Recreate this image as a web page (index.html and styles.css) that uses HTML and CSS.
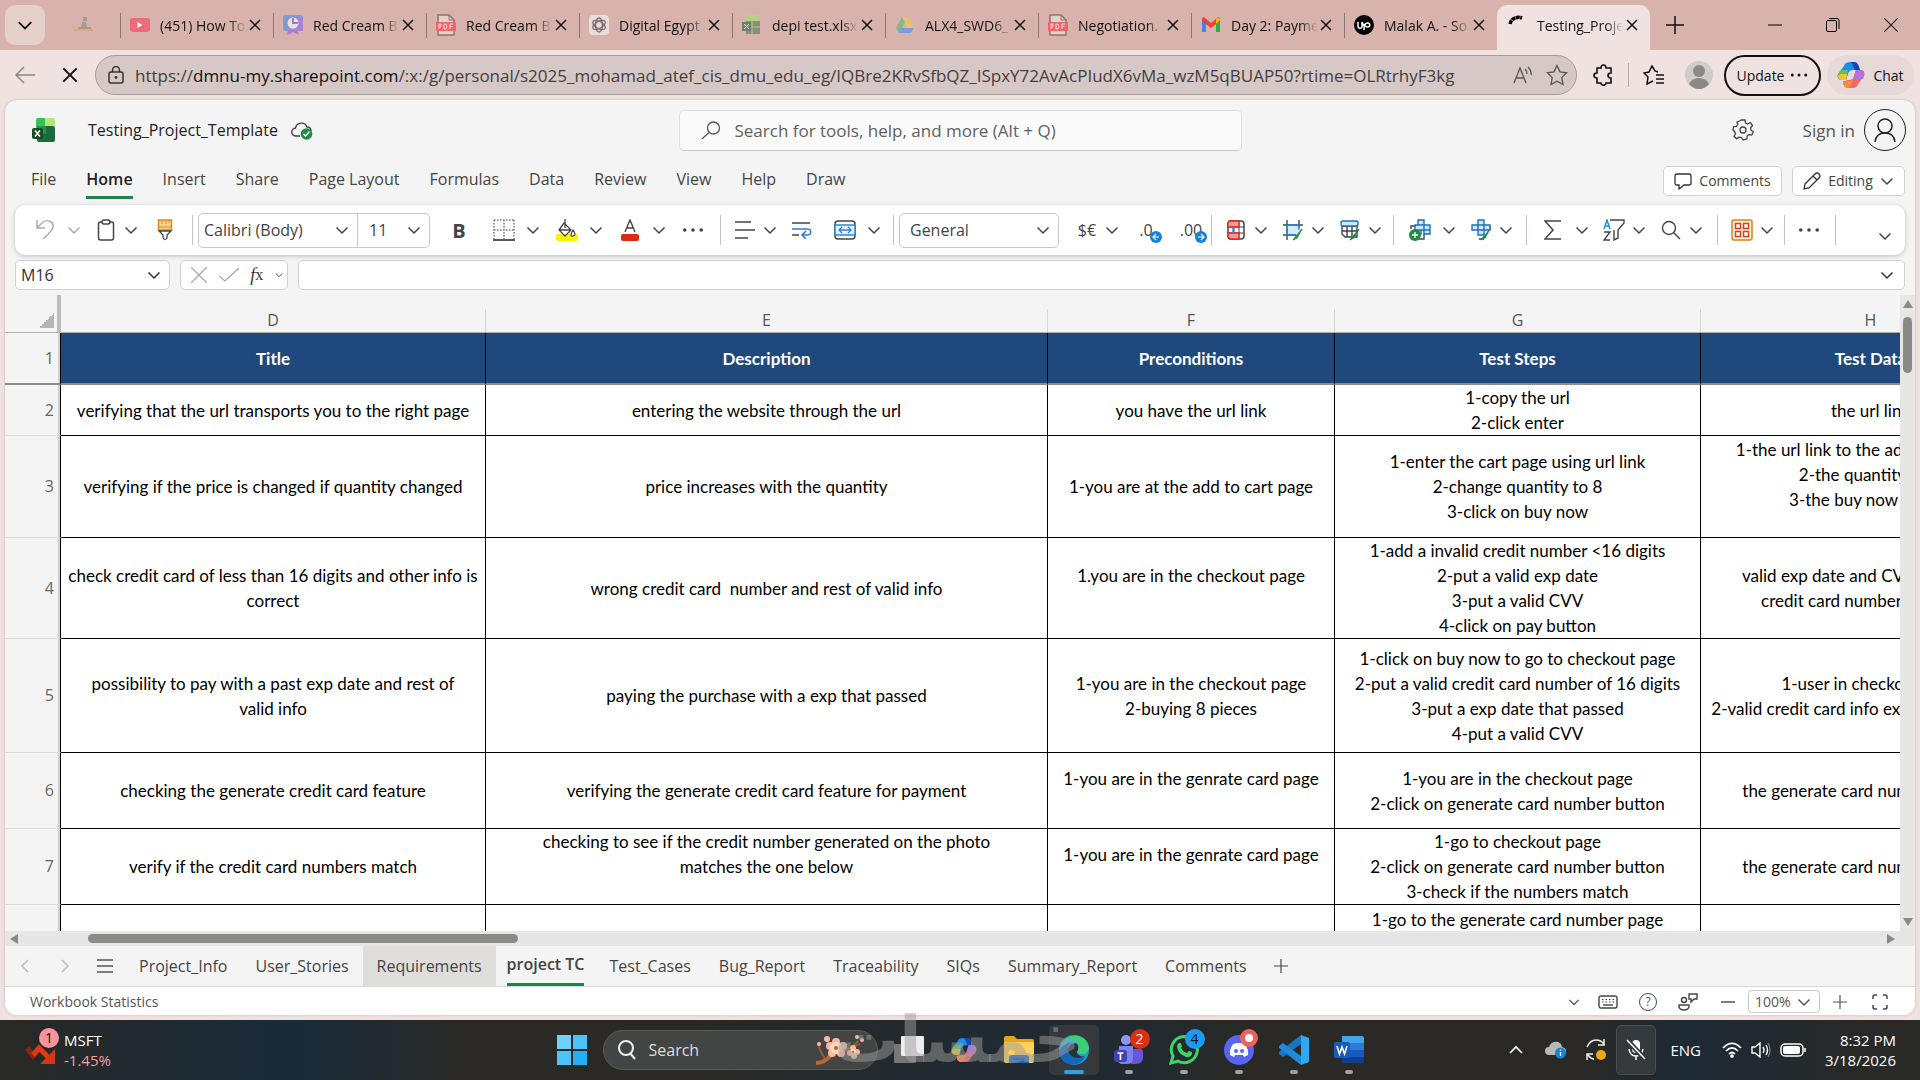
FILE: index.html
```html
<!DOCTYPE html>
<html lang="en">
<head>
  <meta charset="UTF-8">
  <meta name="viewport" content="width=device-width, initial-scale=1.0">
  <title>Testing_Project_Template</title>
  <link rel="stylesheet" href="styles.css">
</head>
<body>
  <!-- shared icons -->
  <svg class="sprite" aria-hidden="true">
    <symbol id="chev" viewBox="0 0 14 14"><path d="M1.5 4.5 7 10l5.500-5.500" fill="none" stroke="currentColor" stroke-width="1.500"/></symbol>
    <symbol id="cross" viewBox="0 0 12 12"><path d="M1 1l10 10M11 1 1 11" fill="none" stroke="currentColor" stroke-width="1.500"/></symbol>
    <symbol id="dots" viewBox="0 0 24 24"><g fill="currentColor"><circle cx="3" cy="12" r="2"/><circle cx="12" cy="12" r="2"/><circle cx="21" cy="12" r="2"/></g></symbol>
    <symbol id="plus" viewBox="0 0 18 18"><path d="M9 0v18M0 9h18" stroke="currentColor" stroke-width="1.500"/></symbol>
    <symbol id="pdf" viewBox="0 0 20 22"><path d="M2 1h11l5 5v15H2z" fill="#e4d0cd" stroke="#8d7370" stroke-width="1.500"/><path d="M13 1v5h5" fill="none" stroke="#8d7370"/><rect x="0" y="8" width="20" height="9" fill="#f0646a"/><path d="M3 15v-5h2v3H3M8 10v5h2l1-2.500-1-2.500zM14 15v-5h3M14 12.500h2.500" fill="none" stroke="#fbd9d9"/></symbol>
    <symbol id="copilot" viewBox="0 0 28 28"><path d="M7 5c1-3 3-4 6-4h4c3 0 4 2 5 5l1 3h-7c-3 0-4 1-5 4l-2 6H5c-4 0-5-3-4-6z" fill="#1b8fe6"/><path d="M1 13 4 9h7l-2 10H5c-4 0-5-3-4-6z" fill="#5cc25a"/><path d="M1 15l3-2h6l-1 6H5c-3 0-4-2-4-4z" fill="#f3c623"/><path d="M13 1h4c3 0 4 2 5 5l1 3h-5c-2-3-2-7-5-8z" fill="#1546b8"/><path d="M21 23c-1 3-3 4-6 4h-4c-3 0-4-2-5-5l4-3h2c3 0 4-1 5-4l2-6h4c4 0 5 3 4 6z" fill="#f0656f"/><path d="M17 15l2-6h4c4 0 5 3 4 6l-1 3h-9z" fill="#b072dc"/><path d="M6 20h6c2 0 3-1 4-2 0 4-2 8-5 9-3 0-4-2-5-5z" fill="#fa8b35"/></symbol>
  </svg>

  <header class="tabstrip">
    <button class="tab-search" aria-label="Search tabs"><svg width="16" height="16"><use href="#chev"/></svg></button>
    <div class="tab pinned"><svg width="22" height="18" viewBox="0 0 22 18"><path d="M10 1h4v4h-4zM9 6h4l1 5h4v2H5v-2h3z" fill="#a99a91"/><path d="M1 14h20" stroke="#d9a970" stroke-width="2" stroke-dasharray="3 1"/></svg></div>
    <div class="tab"><svg width="20" height="20" viewBox="0 0 20 20"><rect y="3" width="20" height="14" rx="3" fill="#ed6a7b"/><path d="M7.500 7v6l5-3z" fill="#fff"/></svg><span>(451) How To</span><button aria-label="Close"><svg width="12" height="12"><use href="#cross"/></svg></button></div>
    <div class="tab"><svg width="20" height="20" viewBox="0 0 20 20"><rect width="20" height="16" rx="3" fill="#7f9bd0"/><path d="M10 16h10V4l-8-4z" fill="#a582d8"/><path d="M5 15l-1 5 6-3 6 3-2-5z" fill="#b277d6"/><circle cx="10" cy="8" r="5.500" fill="#ecdfe9"/><path d="M10 3v5h5" stroke="#8b86c9" stroke-width="2" fill="none"/></svg><span>Red Cream Brand</span><button aria-label="Close"><svg width="12" height="12"><use href="#cross"/></svg></button></div>
    <div class="tab"><svg width="20" height="22"><use href="#pdf"/></svg><span>Red Cream Brand</span><button aria-label="Close"><svg width="12" height="12"><use href="#cross"/></svg></button></div>
    <div class="tab"><svg width="20" height="20" viewBox="0 0 20 20"><rect width="20" height="20" rx="4" fill="#eadcda"/><g fill="none" stroke="#7c706e" stroke-width="1.300"><ellipse cx="10" cy="10" rx="3.500" ry="7"/><ellipse cx="10" cy="10" rx="3.500" ry="7" transform="rotate(60 10 10)"/><ellipse cx="10" cy="10" rx="3.500" ry="7" transform="rotate(120 10 10)"/></g></svg><span>Digital Egypt</span><button aria-label="Close"><svg width="12" height="12"><use href="#cross"/></svg></button></div>
    <div class="tab"><svg width="20" height="20" viewBox="0 0 20 20"><rect x="4" width="13" height="7" rx="1" fill="#b9cf85"/><rect x="4" y="6" width="14" height="13" fill="#84926f"/><path d="M10 6v13M4 12h14" stroke="#b5bda0"/><rect y="7" width="9" height="9" fill="#718068"/><path d="M2 9l5 5M7 9l-5 5" stroke="#e5ded8"/></svg><span>depi test.xlsx</span><button aria-label="Close"><svg width="12" height="12"><use href="#cross"/></svg></button></div>
    <div class="tab"><svg width="20" height="20" viewBox="0 0 20 20"><path d="M7 2h6l-3 5-6 11-3-5z" fill="#84b78d"/><path d="M7 2h6l6 11h-6z" fill="#e8c069"/><path d="M6 13h13l-3 5H4z" fill="#7d9bdd"/></svg><span>ALX4_SWD6_</span><button aria-label="Close"><svg width="12" height="12"><use href="#cross"/></svg></button></div>
    <div class="tab"><svg width="20" height="22"><use href="#pdf"/></svg><span>Negotiation.</span><button aria-label="Close"><svg width="12" height="12"><use href="#cross"/></svg></button></div>
    <div class="tab"><svg width="20" height="20" viewBox="0 0 20 20"><path d="M1 5l4 3v9H1z" fill="#4285f4"/><path d="M15 8l4-3v12h-4z" fill="#34a853"/><path d="M1 4c0-2 2-2 3-1l6 5 6-5c1-1 3-1 3 1v2l-9 7-9-7z" fill="#ea4335"/><path d="M15 4c2-2 4-1 4 1l-4 4z" fill="#fbbc04"/></svg><span>Day 2: Payment</span><button aria-label="Close"><svg width="12" height="12"><use href="#cross"/></svg></button></div>
    <div class="tab"><svg width="20" height="20" viewBox="0 0 20 20"><circle cx="10" cy="10" r="10" fill="#000"/><path d="M4 7v4c0 3 4 3 4 0V7c1 3 3 5 3 5M10 15c0-3 1-7 3.500-7 3 0 3 4 0 4-1.500 0-2.500-1-3.500-3" fill="none" stroke="#fff" stroke-width="1.500"/></svg><span>Malak A. - So</span><button aria-label="Close"><svg width="12" height="12"><use href="#cross"/></svg></button></div>
    <div class="tab active"><svg width="20" height="20" viewBox="0 0 20 20"><path d="M3 9c1-5 6-8 12-6" fill="none" stroke="#000" stroke-width="3.500" stroke-dasharray="4 .5"/></svg><span>Testing_Project</span><button aria-label="Close"><svg width="12" height="12"><use href="#cross"/></svg></button></div>
    <button class="new-tab" aria-label="New tab"><svg width="18" height="18"><use href="#plus"/></svg></button>
    <div class="window-controls">
      <button aria-label="Minimize"><svg width="14" height="14"><path d="M0 7h14" stroke="#000"/></svg></button>
      <button aria-label="Restore"><svg width="14" height="14" viewBox="0 0 14 14" fill="none" stroke="#000"><rect x=".5" y="2.500" width="10" height="11" rx="1.500"/><path d="M3 .5h8q2 0 2 2V11"/></svg></button>
      <button aria-label="Close window"><svg width="14" height="14" viewBox="0 0 12 12"><path d="M0 0l12 12M12 0 0 12" stroke="#222"/></svg></button>
    </div>
  </header>

  <nav class="addressbar">
    <button class="back" aria-label="Back"><svg width="20" height="18" viewBox="0 0 20 18" fill="none" stroke="#8d8585" stroke-width="1.500"><path d="M20 9H1M9 1 1 9l8 8"/></svg></button>
    <button class="stop" aria-label="Stop"><svg width="16" height="16"><use href="#cross"/></svg></button>
    <div class="url">
      <svg width="16" height="18" viewBox="0 0 16 18" fill="none" stroke="#3a3435" stroke-width="1.500"><rect x="1" y="6" width="14" height="11" rx="2"/><path d="M4.500 6V4a3.500 3.500 0 0 1 7 0v2"/><circle cx="8" cy="11.500" r=".7" fill="#3a3435"/></svg>
      <span class="url-text">https://<b>dmnu-my.sharepoint.com</b>/:x:/g/personal/s2025_mohamad_atef_cis_dmu_edu_eg/IQBre2KRvSfbQZ_ISpxY72AvAcPIudX6vMa_wzM5qBUAP50?rtime=OLRtrhyF3kg</span>
      <button aria-label="Read aloud"><svg width="20" height="18" viewBox="0 0 20 18" fill="none" stroke="#5a5354" stroke-width="1.300"><path d="M1 17 7 2l6 15M3 12h8M12 3q2 2 2 5M15 1q4 4 3 8"/></svg></button>
      <button aria-label="Favorite"><svg width="22" height="22" viewBox="0 0 22 22"><path d="M11 1.500l3 6.300 6.600 1-4.800 4.800 1.200 6.900-6-3.300-6 3.300 1.200-6.900L1.400 8.800l6.600-1z" fill="none" stroke="#5a5354" stroke-width="1.300"/></svg></button>
    </div>
    <button class="ext" aria-label="Extensions"><svg width="20" height="22" viewBox="0 0 20 22"><path d="M4 4h4c0-4 5-4 5 0h5v5c-4 0-4 5 0 5v5h-5c0 3-5 3-5 0H4v-5c-4 0-4-5 0-5z" fill="none" stroke="#111" stroke-width="1.600"/></svg></button>
    <button class="favs" aria-label="Favorites"><svg width="22" height="20" viewBox="0 0 22 20" fill="none" stroke="#111" stroke-width="1.500"><path d="M15 7l-3-1-3-5-3 6-5 1 4 4-1 7 6-3M13 10h8M13 14h8M13 18h8"/></svg></button>
    <button class="profile" aria-label="Profile"><svg width="28" height="28" viewBox="0 0 28 28"><circle cx="14" cy="14" r="14" fill="#cfcccb"/><circle cx="14" cy="10" r="6" fill="#8b8886"/><path d="M4 23q3-6 10-6t10 6q-4 5-10 5T4 23z" fill="#8b8886"/></svg></button>
    <button class="update">Update <svg width="18" height="18"><use href="#dots"/></svg></button>
    <button class="chat"><svg width="28" height="28"><use href="#copilot"/></svg>Chat</button>
  </nav>

  <main class="app">
    <header class="titlebar">
      <div class="doc">
        <svg width="23" height="24" viewBox="0 0 23 24"><rect x="4" width="10" height="12" rx="2" fill="#35c05c"/><path d="M13 0h8q2 0 2 2v6H13z" fill="#b7e57a"/><rect x="5" y="8" width="18" height="16" rx="2" fill="#1c6b37"/><path d="M5 8h9v8H5z" fill="#23964a"/><rect y="10" width="11" height="11" rx="2" fill="#134f27"/><path d="M3 12.500l5 6M8 12.500l-5 6" stroke="#fff" stroke-width="1.500"/></svg>
        <h1>Testing_Project_Template</h1>
        <svg width="22" height="20" viewBox="0 0 22 20"><path d="M9 16H5a4 4 0 0 1-.5-8A6 6 0 0 1 16 7q4 0 4 4" fill="none" stroke="#444" stroke-width="1.400"/><circle cx="15.500" cy="14" r="5.800" fill="#1e8e46"/><path d="M12.500 14l2 2 4-4.500" fill="none" stroke="#fff" stroke-width="1.400"/></svg>
      </div>
      <label class="search">
        <svg width="20" height="18" viewBox="0 0 20 18" fill="none" stroke="#555" stroke-width="1.300"><circle cx="12.500" cy="7" r="6"/><path d="M8 11.500 1 18"/></svg>
        <input type="search" placeholder="Search for tools, help, and more (Alt + Q)" aria-label="Search">
      </label>
      <div class="account">
        <button aria-label="Settings"><svg width="22" height="22" viewBox="0 0 22 22" fill="none" stroke="#444" stroke-width="1.300"><path d="M9 1h4l.6 3 2 1 2.700-1.500 2.300 3-2 2.300.2 2.200 2.500 1.700-1.600 3.400-3-.5-1.600 1.500L15 20l-4 1-1.500-2.500-2.500-.3-2.300 1.600-2.700-2.500 1.500-2.600-.9-2L1 11l.5-3.500 3-.2 1.300-1.600L5 3l3.500-1.500z"/><circle cx="11" cy="11" r="3"/></svg></button>
        <a href="#">Sign in</a>
        <button class="person" aria-label="Account"><svg width="22" height="24" viewBox="0 0 22 24" fill="none" stroke="#222" stroke-width="1.500"><circle cx="11" cy="8" r="7"/><path d="M1 24q1-9 10-9t10 9"/></svg></button>
      </div>
    </header>

    <nav class="menu">
      <a href="#">File</a><a href="#" class="current">Home</a><a href="#">Insert</a><a href="#">Share</a><a href="#">Page Layout</a><a href="#">Formulas</a><a href="#">Data</a><a href="#">Review</a><a href="#">View</a><a href="#">Help</a><a href="#">Draw</a>
      <div class="menu-right">
        <button class="comments"><svg width="18" height="18" viewBox="0 0 18 18"><path d="M3 2h12q2 0 2 2v7q0 2-2 2h-5l-5 4v-4H3q-2 0-2-2V4q0-2 2-2z" fill="none" stroke="#333" stroke-width="1.300"/></svg>Comments</button>
        <button class="editing"><svg width="18" height="18" viewBox="0 0 18 18"><path d="M2 12 12 2q2-2 4 0t0 4L6 16l-5 1zM10 4l4 4" fill="none" stroke="#333" stroke-width="1.300"/></svg>Editing<svg width="14" height="14"><use href="#chev"/></svg></button>
      </div>
    </nav>

    <section class="ribbon">
      <div class="group clipboard">
        <div class="split wide disabled"><button aria-label="Undo"><svg width="20" height="22" viewBox="0 0 20 22" fill="none" stroke="currentColor" stroke-width="1.400"><path d="M2 1v8h8M2 9l5-5c5-5 12-1 11 4 0 3-2 4-10 12"/></svg></button><button aria-label="Undo options"><svg width="14" height="14"><use href="#chev"/></svg></button></div>
        <div class="split"><button aria-label="Paste"><svg width="18" height="22" viewBox="0 0 18 22" fill="none" stroke="currentColor" stroke-width="1.500"><rect x="1.500" y="3" width="15" height="18" rx="2"/><rect x="5" y="1" width="8" height="4" rx="2" fill="#fff"/></svg></button><button aria-label="Paste options"><svg width="14" height="14"><use href="#chev"/></svg></button></div>
        <button class="tool wide" aria-label="Format painter"><svg width="16" height="22" viewBox="0 0 16 22"><path d="M1.500 1h13v10h-13z" fill="#fbd28b" stroke="#de8b21" stroke-width="1.500"/><path d="M5 1v4M9 1v4M12 1v3M1 8h14" stroke="#de8b21"/><path d="M2 12h12l-4 4v3q-2 3-4 0v-3z" fill="#fff" stroke="#444" stroke-width="1.300"/></svg></button>
      </div>
      <div class="group font">
        <div class="fontbox">
          <label class="drop name"><select aria-label="Font"><option>Calibri (Body)</option></select><svg width="14" height="14"><use href="#chev"/></svg></label>
          <label class="drop size"><select aria-label="Font size"><option>11</option></select><svg width="14" height="14"><use href="#chev"/></svg></label>
        </div>
        <button class="tool bold">B</button>
        <div class="split wide"><button aria-label="Borders"><svg width="22" height="22" viewBox="0 0 22 22"><g fill="none" stroke="#777" stroke-dasharray="1.500 1.500" stroke-width="1.500"><path d="M1 1h20M1 11h20M1 1v19M11 1v19M21 1v19"/></g><path d="M0 21h22" stroke="#222" stroke-width="1.500"/></svg></button><button aria-label="Border options"><svg width="14" height="14"><use href="#chev"/></svg></button></div>
        <div class="split wide"><button aria-label="Fill color"><svg width="22" height="22" viewBox="0 0 22 22"><rect y="15" width="22" height="7" rx="2" fill="#fff200"/><path d="M8 4l7 7-6 6-6-6zM9 0v9M3 11h12" fill="#fff" stroke="#444" stroke-width="1.300"/><path d="M17 11q4 5 0 6t0-6z" fill="#fff" stroke="#444" stroke-width="1.200"/></svg></button><button aria-label="Fill options"><svg width="14" height="14"><use href="#chev"/></svg></button></div>
        <div class="split wide"><button aria-label="Font color"><svg width="18" height="22" viewBox="0 0 18 22"><path d="M4 13 9 1l5 12M6 9h6" fill="none" stroke="#444" stroke-width="1.400"/><rect y="15" width="18" height="7" rx="2" fill="#d92c12"/></svg></button><button aria-label="Font color options"><svg width="14" height="14"><use href="#chev"/></svg></button></div>
        <button class="tool wide" aria-label="More font options"><svg width="22" height="22"><use href="#dots"/></svg></button>
      </div>
      <div class="group align">
        <div class="split"><button aria-label="Align"><svg width="20" height="18" viewBox="0 0 20 18"><path d="M0 1h16M0 9h20M0 17h13" stroke="#444" stroke-width="1.500"/></svg></button><button aria-label="Align options"><svg width="14" height="14"><use href="#chev"/></svg></button></div>
        <button class="tool" aria-label="Wrap text"><svg width="20" height="18" viewBox="0 0 20 18" fill="none" stroke-width="1.500"><path d="M0 2h18M0 14h7" stroke="#444"/><path d="M0 8h15c5 0 5 6 0 6h-4M14 10l-4 4 4 4" stroke="#2a7fd0"/></svg></button>
        <div class="split wide"><button aria-label="Merge"><svg width="22" height="20" viewBox="0 0 22 20"><rect x="1" y="1" width="20" height="18" rx="3" fill="#fff" stroke="#444" stroke-width="1.500"/><rect x="1" y="5" width="20" height="10" fill="#e5f2fc" stroke="#2a86d8" stroke-width="1.500"/><path d="M5 10h12M8 7l-3 3 3 3M14 7l3 3-3 3" fill="none" stroke="#2a86d8" stroke-width="1.300"/></svg></button><button aria-label="Merge options"><svg width="14" height="14"><use href="#chev"/></svg></button></div>
      </div>
      <div class="group number">
        <label class="drop format"><select aria-label="Number format"><option>General</option></select><svg width="14" height="14"><use href="#chev"/></svg></label>
        <div class="split"><button class="glyph">$€</button><button aria-label="Currency options"><svg width="14" height="14"><use href="#chev"/></svg></button></div>
        <button class="tool wide decimal">.0<svg width="12" height="12" viewBox="0 0 12 12"><circle cx="6" cy="6" r="6" fill="#1583d7"/><path d="M9 6H3M6 3 3 6l3 3" fill="none" stroke="#fff" stroke-width="1.200"/></svg></button>
        <button class="tool wide decimal">.00<svg width="12" height="12" viewBox="0 0 12 12"><circle cx="6" cy="6" r="6" fill="#1583d7"/><path d="M3 6h6M6 3l3 3-3 3" fill="none" stroke="#fff" stroke-width="1.200"/></svg></button>
      </div>
      <div class="group styles">
        <div class="split"><button aria-label="Conditional formatting"><svg width="18" height="20" viewBox="0 0 18 20"><rect x="1" y="1" width="16" height="18" rx="3" fill="#fff" stroke="#444" stroke-width="1.500"/><path d="M1 7h16M1 13h16M12 1v18M7 7v6" stroke="#444"/><path d="M2 1h10v6H1V3zM1 13h11v6H3l-2-2z" fill="#f79a97" stroke="#d8291c" stroke-width="1.300"/><path d="M6 7v6" stroke="#2a86d8" stroke-width="1.500"/></svg></button><button aria-label="More"><svg width="14" height="14"><use href="#chev"/></svg></button></div>
        <div class="split"><button aria-label="Format cells"><svg width="20" height="22" viewBox="0 0 20 22"><rect x="4" y="6" width="12" height="10" fill="#d6ecfb"/><path d="M0 6h20M0 16h13M4 1v20M16 1v8" stroke="#444" stroke-width="1.400"/><path d="M4 6h12v5M4 6v10h8" fill="none" stroke="#2a86d8" stroke-width="1.300"/><path d="M19 10l-6 7-3 4 4-2z" fill="#1e8e46" stroke="#1e8e46"/></svg></button><button aria-label="More"><svg width="14" height="14"><use href="#chev"/></svg></button></div>
        <div class="split"><button aria-label="Format as table"><svg width="20" height="22" viewBox="0 0 20 22"><path d="M2 7h15v11H5l-3-3zM2 12h15M7 7v11M12 7v11" fill="none" stroke="#444" stroke-width="1.400"/><rect x="1" y="2" width="17" height="5" rx="2" fill="#cfe8fb" stroke="#1c6fc0" stroke-width="1.400"/><path d="M19 10l-6 7-3 4 4-2z" fill="#1e8e46" stroke="#1e8e46"/></svg></button><button aria-label="More"><svg width="14" height="14"><use href="#chev"/></svg></button></div>
      </div>
      <div class="group cells">
        <div class="split wide"><button aria-label="Insert cells"><svg width="22" height="22" viewBox="0 0 22 22"><path d="M2 10V7h6M10 20h5v-5" fill="none" stroke="#444" stroke-width="1.400"/><path d="M9 1h6v5h6v9h-6v-4h-3v4H9v-4H6V6h3zM9 6h6v9M15 6v9M9 11h12" fill="#cfe8fb" stroke="#1c6fc0" stroke-width="1.400"/><circle cx="6" cy="16" r="6" fill="#1e8e46"/><path d="M6 13v6M3 16h6" stroke="#fff" stroke-width="1.300"/></svg></button><button aria-label="More"><svg width="14" height="14"><use href="#chev"/></svg></button></div>
        <div class="split"><button aria-label="Format rows and columns"><svg width="20" height="22" viewBox="0 0 20 22"><path d="M8 20h5M19 7v3" stroke="#444" stroke-width="1.400"/><path d="M7 1h6v5h6v5h-6v5H7v-5H1V6h6zM7 6h6v5H7z" fill="#cfe8fb" stroke="#1c6fc0" stroke-width="1.400"/><path d="M19 10l-6 7-3 4 4-2z" fill="#1e8e46" stroke="#1e8e46"/></svg></button><button aria-label="More"><svg width="14" height="14"><use href="#chev"/></svg></button></div>
      </div>
      <div class="group edit">
        <div class="split wide"><button aria-label="AutoSum"><svg width="18" height="20" viewBox="0 0 18 20"><path d="M17 1H1l8 9-8 9h16" fill="none" stroke="#444" stroke-width="1.500"/></svg></button><button aria-label="More"><svg width="14" height="14"><use href="#chev"/></svg></button></div>
        <div class="split"><button aria-label="Sort and filter"><svg width="22" height="22" viewBox="0 0 22 22" fill="none" stroke-width="1.400"><path d="M7 1h14v3l-6 7v8l-4 2V11" stroke="#444"/><path d="M1 10 4 1l3 9M2 7h4" stroke="#1c86d8"/><path d="M1 13h6l-6 8h6" stroke="#444"/></svg></button><button aria-label="More"><svg width="14" height="14"><use href="#chev"/></svg></button></div>
        <div class="split"><button aria-label="Find"><svg width="20" height="20" viewBox="0 0 20 20"><circle cx="8" cy="8" r="6.500" fill="none" stroke="#444" stroke-width="1.400"/><path d="M13 13l6 6" stroke="#444" stroke-width="1.400"/></svg></button><button aria-label="More"><svg width="14" height="14"><use href="#chev"/></svg></button></div>
      </div>
      <div class="group addins">
        <div class="split"><button aria-label="Add-ins"><svg width="22" height="22" viewBox="0 0 22 22" stroke-width="1.500"><rect x="1" y="1" width="20" height="20" rx="2" fill="#fdf0dc" stroke="#df7f1b"/><path d="M4.500 4.500h5v5h-5zM12.500 4.500h5v5h-5zM4.500 12.500h5v5h-5zM12.500 12.500h5v5h-5z" fill="#fff" stroke="#d8401c"/></svg></button><button aria-label="More"><svg width="14" height="14"><use href="#chev"/></svg></button></div>
      </div>
      <div class="group more"><button class="tool" aria-label="More commands"><svg width="22" height="22"><use href="#dots"/></svg></button></div>
      <button class="collapse" aria-label="Ribbon display options"><svg width="14" height="14"><use href="#chev"/></svg></button>
    </section>

    <section class="formulabar">
      <label class="namebox"><input value="M16" aria-label="Name box"><svg width="14" height="14"><use href="#chev"/></svg></label>
      <div class="fx">
        <button aria-label="Cancel"><svg width="16" height="16" viewBox="0 0 16 16"><path d="M0 0l16 16M16 0 0 16" stroke="#aaa" stroke-width="1.300"/></svg></button>
        <button aria-label="Enter"><svg width="20" height="14" viewBox="0 0 20 14"><path d="M0 8l6 5L20 0" fill="none" stroke="#aaa" stroke-width="1.300"/></svg></button>
        <button class="fx-label"><i>f</i><sub>x</sub></button>
        <button aria-label="Functions"><svg width="8" height="8"><use href="#chev"/></svg></button>
      </div>
      <label class="formula"><input aria-label="Formula"><svg width="14" height="14"><use href="#chev"/></svg></label>
    </section>

    <section class="sheet">
      <div class="cells-area">
        <table>
          <colgroup><col class="c-num"><col class="c-d"><col class="c-e"><col class="c-f"><col class="c-g"><col class="c-h"></colgroup>
          <thead>
            <tr class="letters"><th class="corner"></th><th><span>D</span></th><th><span>E</span></th><th><span>F</span></th><th><span>G</span></th><th><span>H</span></th></tr>
            <tr class="titles"><th class="num">1</th><th>Title</th><th>Description</th><th>Preconditions</th><th>Test Steps</th><th>Test Data</th></tr>
          </thead>
          <tbody>
            <tr class="r2"><th class="num">2</th><td>verifying that the url transports you to the right page</td><td>entering the website through the url</td><td>you have the url link</td><td>1-copy the url<br>2-click enter</td><td>the url link</td></tr>
            <tr class="r3"><th class="num">3</th><td>verifying if the price is changed if quantity changed</td><td>price increases with the quantity</td><td>1-you are at the add to cart page</td><td>1-enter the cart page using url link<br>2-change quantity to 8<br>3-click on buy now</td><td>1-the url link to the add to cart page<br>2-the quantity field<br>3-the buy now button<br>&nbsp;</td></tr>
            <tr class="r4"><th class="num">4</th><td>check credit card of less than 16 digits and other info is<br>correct</td><td>wrong credit card &nbsp;number and rest of valid info</td><td>1.you are in the checkout page<br>&nbsp;</td><td>1-add a invalid credit number &lt;16 digits<br>2-put a valid exp date<br>3-put a valid CVV<br>4-click on pay button</td><td>valid exp date and CVV and invalid<br>credit card number &lt;16 digits</td></tr>
            <tr class="r5"><th class="num">5</th><td>possibility to pay with a past exp date and rest of<br>valid info</td><td>paying the purchase with a exp that passed</td><td>1-you are in the checkout page<br>2-buying 8 pieces</td><td>1-click on buy now to go to checkout page<br>2-put a valid credit card number of 16 digits<br>3-put a exp date that passed<br>4-put a valid CVV</td><td>1-user in checkout page<br>2-valid credit card info except the exp date</td></tr>
            <tr class="r6"><th class="num">6</th><td>checking the generate credit card feature</td><td>verifying the generate credit card feature for payment</td><td>1-you are in the genrate card page<br>&nbsp;</td><td>1-you are in the checkout page<br>2-click on generate card number button</td><td>the generate card number page url</td></tr>
            <tr class="r6"><th class="num">7</th><td>verify if the credit card numbers match</td><td>checking to see if the credit number generated on the photo<br>matches the one below<br>&nbsp;</td><td>1-you are in the genrate card page<br>&nbsp;</td><td>1-go to checkout page<br>2-click on generate card number button<br>3-check if the numbers match</td><td>the generate card number page url</td></tr>
            <tr class="r8"><th class="num"></th><td></td><td></td><td></td><td>1-go to the generate card number page</td><td></td></tr>
          </tbody>
        </table>
      </div>
      <div class="vscroll"><i class="up"></i><i class="thumb"></i><i class="down"></i></div>
    </section>
    <div class="hscroll"><i class="left"></i><i class="thumb"></i><i class="right"></i></div>

    <nav class="sheet-tabs">
      <button class="nav" aria-label="Previous sheet"><svg width="8" height="14" viewBox="0 0 8 14"><path d="M7 1 1 7l6 6" fill="none" stroke="#bbb" stroke-width="1.500"/></svg></button>
      <button class="nav" aria-label="Next sheet"><svg width="8" height="14" viewBox="0 0 8 14"><path d="M1 1l6 6-6 6" fill="none" stroke="#bbb" stroke-width="1.500"/></svg></button>
      <button class="nav" aria-label="All sheets"><svg width="16" height="14" viewBox="0 0 16 14"><path d="M0 1h16M0 7h16M0 13h16" stroke="#555" stroke-width="1.500"/></svg></button>
      <a href="#">Project_Info</a><a href="#">User_Stories</a><a href="#" class="hover">Requirements</a><a href="#" class="current"><span>project TC</span></a><a href="#">Test_Cases</a><a href="#">Bug_Report</a><a href="#">Traceability</a><a href="#">SIQs</a><a href="#">Summary_Report</a><a href="#">Comments</a>
      <button class="nav" aria-label="New sheet"><svg width="14" height="14" viewBox="0 0 18 18"><use href="#plus"/></svg></button>
    </nav>

    <footer class="status">
      <span>Workbook Statistics</span>
      <div class="status-tools">
        <button class="narrow" aria-label="More"><svg width="12" height="12"><use href="#chev"/></svg></button>
        <button aria-label="Keyboard"><svg width="20" height="14" viewBox="0 0 20 14"><rect x="1" y="1" width="18" height="12" rx="2" fill="none" stroke="#444" stroke-width="1.400"/><path d="M4 4.500h12M4 7h12" stroke="#444" stroke-dasharray="1.500 2"/><path d="M5 10h10" stroke="#444" stroke-width="1.400"/></svg></button>
        <button class="help"><span>?</span></button>
        <button aria-label="Feedback"><svg width="20" height="18" viewBox="0 0 20 18" fill="none" stroke="#444" stroke-width="1.400"><circle cx="6" cy="7" r="2.500"/><path d="M1 12h10v2q-1 3-5 3t-5-3zM11 1h8v5h-3l-3 3V6h-2z"/></svg></button>
        <button aria-label="Zoom out"><svg width="14" height="14"><path d="M0 7h14" stroke="#555" stroke-width="1.500"/></svg></button>
        <label class="drop zoom"><select aria-label="Zoom"><option>100%</option></select><svg width="14" height="14"><use href="#chev"/></svg></label>
        <button aria-label="Zoom in"><svg width="14" height="14"><use href="#plus"/></svg></button>
        <button aria-label="Full screen"><svg width="16" height="16" viewBox="0 0 16 16"><path d="M1 5V3q0-2 2-2h2M11 1h2q2 0 2 2v2M15 11v2q0 2-2 2h-2M5 15H3q-2 0-2-2v-2" fill="none" stroke="#444" stroke-width="1.500"/></svg></button>
      </div>
    </footer>
  </main>

  <footer class="taskbar">
    <div class="widget">
      <svg width="36" height="32" viewBox="0 0 36 32"><path d="M3 14l6 8 7-8" fill="none" stroke="#8c2310" stroke-width="5"/><path d="M9 21l6-7 9 9" fill="none" stroke="#e03a12" stroke-width="5"/><path d="M16 30h15V15z" fill="#d93312"/></svg>
      <em class="badge">1</em>
      <p>MSFT<span>-1.45%</span></p>
    </div>
    <div class="tasks">
      <button aria-label="Start"><svg width="30" height="30" viewBox="0 0 30 30"><path d="M0 0h14v14H0z" fill="#6fd0fb"/><path d="M16 0h14v14H16z" fill="#4cc4fa"/><path d="M0 16h14v14H0z" fill="#4cc4fa"/><path d="M16 16h14v14H16z" fill="#27aef3"/></svg></button>
      <label class="task-search">
        <svg width="18" height="20" viewBox="0 0 18 20" fill="none" stroke="#eee" stroke-width="2"><circle cx="8" cy="8" r="7"/><path d="M12 13l5 6"/></svg>
        <input placeholder="Search" aria-label="Search Windows">
        <svg width="54" height="32" viewBox="0 0 54 32"><path d="M4 29c10-1 14-6 20-9s14-3 22-13M14 26C9 20 8 16 6 10M24 20c-6-4-8-10-8-14M38 14l10-4" fill="none" stroke="#9a5a2c" stroke-width="2"/><path d="M4 29c7 0 11-3 15-8" fill="none" stroke="#b56a30" stroke-width="4"/><g fill="#f6b9a4"><circle cx="24" cy="8" r="4"/><circle cx="31" cy="12" r="4"/><circle cx="29" cy="19" r="4"/><circle cx="20" cy="19" r="4"/><circle cx="18" cy="12" r="4"/><circle cx="41" cy="14" r="3"/><circle cx="45" cy="18" r="3"/><circle cx="38" cy="19" r="3"/><circle cx="42" cy="22" r="3"/><circle cx="15" cy="5" r="3"/><circle cx="7" cy="10" r="2"/><circle cx="45" cy="3" r="2"/><circle cx="50" cy="6" r="2"/></g><circle cx="24" cy="14" r="6" fill="#fbdcb8"/><circle cx="41" cy="18" r="3" fill="#fbdcb8"/><circle cx="24" cy="14" r="2" fill="#c4582f"/><circle cx="41" cy="18" r="1.200" fill="#c4582f"/></svg>
      </label>
      <button aria-label="Task view"><svg width="30" height="28" viewBox="0 0 30 28"><rect y="8" width="22" height="19" rx="1" fill="#777"/><rect x="7" width="23" height="20" rx="1" fill="#ededed"/></svg></button>
      <button aria-label="Copilot"><svg width="28" height="26"><use href="#copilot"/></svg></button>
      <button aria-label="File Explorer"><svg width="30" height="28" viewBox="0 0 30 28"><path d="M0 2q0-2 2-2h8l3 3h15q2 0 2 2v7H0z" fill="#e9a313"/><rect y="6" width="30" height="21" rx="2" fill="#fbd25a"/><path d="M5 27v-5q0-3 3-3h14q3 0 3 3v5z" fill="#1769b8"/><path d="M9 23h12" stroke="#0a4a8c" stroke-width="2"/></svg></button>
      <button class="focused" aria-label="Edge"><svg width="30" height="30" viewBox="0 0 30 30"><circle cx="15" cy="15" r="15" fill="#1a9fdd"/><path d="M2 9C8-3 29-2 30 13c0 6-9 8-12 4 3-6-5-11-16-8z" fill="#3ccf78"/><path d="M0 15C2 7 10 3 17 8c-6-2-9 3-8 7 1 7 8 9 17 7-4 8-14 10-20 5-4-3-6-7-6-12z" fill="#1565b8"/><path d="M9 15c0-4 3-7 8-7 3 2 3 6 1 9 0 3 4 5 8 4-6 4-16 2-17-6z" fill="#26323a"/><path d="M0 15C2 5 13 1 19 9 11 5 5 9 0 15z" fill="#2bb6ee"/></svg></button>
      <button class="running" aria-label="Teams"><svg width="30" height="30" viewBox="0 0 30 30"><circle cx="12" cy="5" r="5" fill="#8d95f7"/><path d="M17 14h9q3 0 3 3v5q0 7-7 7h-5z" fill="#6a55d8"/><path d="M5 11h14v12q0 6-6 6H8q-4 0-4-5z" fill="#7a83ee"/><rect y="15" width="13" height="12" rx="3" fill="#3f42b0"/><path d="M3.500 18h6M6.500 18v7" stroke="#fff" stroke-width="1.700"/></svg><em class="badge red">2</em></button>
      <button class="running" aria-label="WhatsApp"><svg width="30" height="30" viewBox="0 0 30 30"><path d="M2 28l2-7A13 13 0 1 1 9 26z" fill="none" stroke="#3bd668" stroke-width="3"/><path d="M10 8q2-1 3 3l-1 2q2 4 6 5l2-2q4 1 3 3-2 4-6 3Q9 19 8 12q0-3 2-4z" fill="#3bd668"/></svg><em class="badge blue">4</em></button>
      <button class="running" aria-label="Discord"><svg width="30" height="30" viewBox="0 0 30 30"><circle cx="15" cy="15" r="15" fill="#5865f2"/><path d="M9 9q6-2 12 0 4 6 3 11l-4 2-1-2h-8l-1 2-4-2Q5 15 9 9z" fill="#fff"/><circle cx="12" cy="16" r="2" fill="#5865f2"/><circle cx="18" cy="16" r="2" fill="#5865f2"/></svg><em class="badge dot"></em></button>
      <button class="running" aria-label="Visual Studio Code"><svg width="30" height="30" viewBox="0 0 30 30"><path d="M22 0l8 3v24l-8 3z" fill="#2fa9f0"/><path d="M22 0v9L4 22l-4-3v-2z" fill="#1577c4"/><path d="M22 30v-9L4 8 0 11v2z" fill="#1b8cdc"/></svg></button>
      <button class="running" aria-label="Word"><svg width="30" height="28" viewBox="0 0 30 28"><path d="M8 0h20q2 0 2 2v5H8z" fill="#41a5ee"/><path d="M8 7h22v7H8z" fill="#2b7cd3"/><path d="M8 14h22v7H8z" fill="#185abd"/><path d="M8 21h22v4q0 2-2 2H8z" fill="#103f91"/><rect y="6" width="16" height="16" rx="2" fill="#185abd"/><path d="M3 10l2.500 8L8 11l2.500 7L13 10" fill="none" stroke="#fff" stroke-width="1.600"/></svg></button>
    </div>
    <div class="tray">
      <button aria-label="Hidden icons"><svg width="14" height="14" viewBox="0 0 14 14"><path d="M1 10l6-6 6 6" fill="none" stroke="#fff" stroke-width="1.700"/></svg></button>
      <button aria-label="OneDrive"><svg width="22" height="18" viewBox="0 0 22 18"><path d="M4 14a4 4 0 0 1 0-8C6-1 16-1 17 6q4 1 4 4t-4 4z" fill="#b9b9b9"/><circle cx="15.500" cy="12" r="5.500" fill="#1583d7"/><path d="M15.500 11v4M15.500 8.500v1" stroke="#fff" stroke-width="1.300"/></svg></button>
      <button aria-label="Update"><svg width="20" height="22" viewBox="0 0 20 22" fill="none" stroke="#eee" stroke-width="1.500"><path d="M1 8Q4 1 10 1q5 0 8 4M18 0v6h-6M1 21v-6h6M2 16q3 4 6 4"/><circle cx="15" cy="16" r="5" fill="#f3a712" stroke="none"/></svg></button>
      <button class="mic" aria-label="Microphone"><svg width="20" height="22" viewBox="0 0 20 22" fill="none"><rect x="6" y="1" width="8" height="13" rx="4" fill="#fff"/><path d="M3 10q1 7 7 7t7-7M10 17v4" stroke="#fff" stroke-width="1.500"/><path d="M1 1l18 19" stroke="#35393b" stroke-width="5"/><path d="M1 1l18 19" stroke="#fff" stroke-width="1.500"/></svg></button>
      <span class="lang">ENG</span>
      <div class="system">
        <svg width="20" height="16" viewBox="0 0 20 16" fill="none" stroke="#fff" stroke-width="1.700"><path d="M1 6q9-9 18 0M4 9q6-6 12 0M7 12q3-3 6 0"/><circle cx="10" cy="14" r="1"/></svg>
        <svg width="20" height="16" viewBox="0 0 20 16" fill="none" stroke="#fff" stroke-width="1.400"><path d="M1 5h3l5-4v14l-5-4H1zM12 5q2 3 0 6M15 3q3 5 0 10"/><path d="M17 1q4 7 0 14" stroke="#777"/></svg>
        <svg width="26" height="14" viewBox="0 0 26 14"><rect x="1" y="1" width="22" height="12" rx="4" fill="none" stroke="#fff" stroke-width="1.500"/><rect x="3" y="3" width="17" height="8" rx="2" fill="#fff"/><path d="M25 5v4" stroke="#fff" stroke-width="1.500"/></svg>
      </div>
      <p class="clock">8:32 PM<span>3/18/2026</span></p>
    </div>
    <div class="watermark" lang="ar">خمسات</div>
  </footer>
</body>
</html>
```
FILE: styles.css
```css
* {
  box-sizing: border-box;
}

body {
  margin: 0;
  height: 100vh;
  display: flex;
  flex-direction: column;
  overflow: hidden;
  background-color: #f0e2e0;
  font-family: "Open Sans", sans-serif;
  font-size: 16px;
  color: #333;
}

button, input, select {
  font: inherit;
  color: inherit;
  background: none;
  border: none;
  padding: 0;
  margin: 0;
  outline: none;
}

button {
  display: flex;
  align-items: center;
  justify-content: center;
}

a {
  color: inherit;
  text-decoration: none;
}

svg {
  flex: none;
  display: block;
}

.sprite {
  position: absolute;
  width: 0;
  height: 0;
}

/* browser tabs */
.tabstrip {
  flex: none;
  display: flex;
  align-items: center;
  height: 50px;
  padding-left: 5px;
  background-color: #d8b2ac;
  color: #111;
  font-size: 14px;
}

.tab-search {
  width: 40px;
  height: 40px;
  border-radius: 10px;
  background-color: #e6d0cc;
}

.tab {
  display: flex;
  align-items: center;
  width: 153px;
  height: 25px;
  padding-left: 9px;
  border-left: 1px solid #8f7773;
}

.tab.pinned {
  width: 75px;
  padding-left: 28px;
  border-left: none;
}

.tab span {
  flex: none;
  width: 86px;
  margin-left: 10px;
  overflow: hidden;
  white-space: nowrap;
  mask-image: linear-gradient(to right, #000 80%, transparent);
}

.tab button {
  width: 18px;
}

.tab.active {
  align-self: flex-end;
  height: 45px;
  padding-bottom: 5px;
  border: none;
  padding-left: 10px;
  border-radius: 10px 10px 0 0;
  background-color: #f0e2e0;
}

.new-tab {
  width: 50px;
}

.window-controls {
  display: flex;
  margin-left: auto;
}

.window-controls button {
  width: 58px;
  height: 48px;
}

/* address bar */
.addressbar {
  flex: none;
  display: flex;
  align-items: center;
  height: 50px;
  padding: 0 6px 0 5px;
  color: #111;
}

.back {
  width: 40px;
}

.stop {
  width: 50px;
}

.url {
  flex: 1;
  display: flex;
  align-items: center;
  height: 40px;
  padding: 0 2px 0 12px;
  border: 1px solid #a89d9d;
  border-radius: 20px;
  background-color: #d6c8c7;
}

.url-text {
  flex: 1;
  margin-left: 11px;
  font-size: 17px;
  color: #453e40;
  white-space: nowrap;
  overflow: hidden;
}

.url-text b {
  font-weight: normal;
  color: #111;
}

.url button {
  width: 34px;
}

.ext {
  width: 52px;
  height: 24px;
  border-right: 1px solid #b8abaa;
}

.favs {
  width: 50px;
}

.profile {
  width: 40px;
}

.update {
  width: 97px;
  height: 41px;
  margin: 0 6px 0 5px;
  gap: 6px;
  border: 2px solid #111;
  border-radius: 21px;
  font-size: 14px;
}

.chat {
  width: 87px;
  height: 40px;
  gap: 8px;
  border-radius: 20px;
  background-color: #e6d9d7;
  font-size: 14px;
}

/* excel window */
.app {
  flex: 1;
  min-height: 0;
  display: flex;
  flex-direction: column;
  margin: 0 5px 5px;
  border-radius: 12px;
  overflow: hidden;
  background-color: #f4f4f4;
  box-shadow: 0 0 3px #c9b3b0;
}

.titlebar {
  flex: none;
  display: grid;
  grid-template-columns: 1fr 563px 1fr;
  align-items: center;
  height: 60px;
}

.doc {
  display: flex;
  align-items: center;
  padding-left: 27px;
}

.doc h1 {
  margin: 0 13px 0 33px;
  font-size: 16px;
  font-weight: normal;
  color: #222;
}

.search {
  display: flex;
  align-items: center;
  gap: 14px;
  height: 41px;
  padding: 0 21px;
  border: 1px solid #e0e0e0;
  border-bottom-color: #c8c8c8;
  border-radius: 5px;
  background-color: #fafafa;
  font-size: 17px;
}

.search input {
  flex: 1;
}

.search input::placeholder {
  color: #616161;
  opacity: 1;
}

.account {
  display: flex;
  align-items: center;
  justify-content: flex-end;
  padding-right: 9px;
  font-size: 17px;
  color: #555;
}

.account a {
  margin: 0 9px 0 49px;
}

.person {
  width: 42px;
  height: 42px;
  border: 1px solid #222;
  border-radius: 50%;
}

.menu {
  flex: none;
  display: flex;
  align-items: center;
  gap: 30px;
  height: 45px;
  padding: 0 10px 4px 26px;
  color: #444;
}

.menu a {
  line-height: 34px;
  border-bottom: 3px solid transparent;
}

.menu .current {
  font-weight: 600;
  color: #222;
  border-bottom-color: #1e8449;
}

.menu-right {
  display: flex;
  gap: 10px;
  margin-left: auto;
  font-size: 14px;
}

.menu-right button {
  height: 30px;
  gap: 7px;
  border: 1px solid #d1d1d1;
  border-radius: 5px;
  background-color: #fff;
}

.comments {
  width: 119px;
}

.editing {
  width: 113px;
}

/* ribbon */
.ribbon {
  flex: none;
  display: flex;
  align-items: center;
  height: 50px;
  margin: 0 10px;
  border-radius: 10px;
  background-color: #fff;
  box-shadow: 0 1px 4px #bbb;
  color: #444;
}

.group {
  display: flex;
  align-items: center;
  gap: 5px;
  height: 30px;
  padding-left: 6px;
  border-right: 1px solid #c9c0c2;
}

.clipboard { width: 178px; padding-left: 10px; }
.font { width: 528px; padding-left: 5px; }
.align { width: 173px; }
.number { width: 318px; padding-left: 5px; }
.styles { width: 182px; }
.cells { width: 133px; }
.edit { width: 191px; }
.addins { width: 67px; }
.more { width: 51px; }

.split {
  display: flex;
  margin-right: 2px;
}

.split button {
  width: 36px;
  height: 30px;
}

.split button + button {
  width: 14px;
}

.split.wide {
  margin-right: 0;
}

.split.wide button {
  width: 40px;
}

.split.wide button + button {
  width: 18px;
}

.disabled {
  color: #aaa;
}

.tool {
  width: 36px;
  height: 30px;
}

.tool.wide {
  width: 40px;
}

.bold {
  width: 40px;
  font-weight: bold;
  font-size: 20px;
}

.decimal {
  position: relative;
}

.decimal svg {
  position: absolute;
  right: 4px;
  bottom: 2px;
}

.drop {
  position: relative;
  display: flex;
  align-items: center;
}

.drop select {
  width: 100%;
  height: 100%;
  appearance: none;
}

.drop svg {
  position: absolute;
  right: 8px;
  pointer-events: none;
}

.fontbox {
  display: flex;
  width: 232px;
  height: 35px;
  margin-right: 4px;
  border: 1px solid #c8c8c8;
  border-radius: 5px;
}

.name {
  width: 159px;
  padding-left: 5px;
  border-right: 1px solid #c8c8c8;
}

.size {
  flex: 1;
  padding-left: 11px;
}

.format {
  width: 160px;
  height: 35px;
  margin-right: 5px;
  padding-left: 10px;
  border: 1px solid #c8c8c8;
  border-radius: 5px;
}

.collapse {
  margin: 12px 13px 0 auto;
}

/* formula bar */
.formulabar {
  flex: none;
  display: flex;
  gap: 10px;
  height: 40px;
  padding: 5px 10px;
}

.formulabar > * {
  display: flex;
  align-items: center;
  height: 30px;
  border: 1px solid #d1d1d1;
  border-radius: 5px;
  background-color: #fff;
}

.namebox {
  width: 155px;
  padding: 0 8px 0 5px;
}

.namebox input, .formula input {
  flex: 1;
  min-width: 0;
}

.fx {
  width: 108px;
  padding: 0 4px 0 10px;
  justify-content: space-between;
}

.fx-label {
  font-family: "Liberation Serif", serif;
  font-size: 18px;
}

.fx-label sub {
  font-size: 16px;
}

.formula {
  flex: 1;
  padding: 0 10px;
}

/* sheet */
.sheet {
  flex: 1;
  min-height: 0;
  display: flex;
}

.cells-area {
  flex: 1;
  min-width: 0;
  overflow: hidden;
}

table {
  width: 2036px;
  table-layout: fixed;
  border-collapse: separate;
  border-spacing: 0;
  font-family: Lato, sans-serif;
  font-size: 17px;
  line-height: 25px;
  color: #000;
}

.c-num { width: 56px; }
.c-d { width: 425px; }
.c-e { width: 562px; }
.c-f { width: 287px; }
.c-g { width: 366px; }
.c-h { width: 340px; }

td, th {
  padding: 0;
  text-align: center;
  white-space: nowrap;
}

td {
  background-color: #fff;
  border-right: 1px solid #000;
  border-bottom: 1px solid #000;
}

.letters th {
  height: 38px;
  padding-top: 14px;
  border-bottom: 1px solid #b0b0b0;
  font-family: "Open Sans", sans-serif;
  font-size: 16px;
  font-weight: normal;
  line-height: 23px;
  color: #555;
}

.letters span {
  display: block;
  border-right: 1px solid #d8d8d8;
}

.letters .corner {
  border-right: 4px solid #bdbdbd;
  background: linear-gradient(135deg, transparent 50%, #b5b5b5 50%) 34px 18px / 15px 15px no-repeat;
}

.titles th {
  height: 52px;
  border-right: 1px solid #000;
  border-bottom: 2px solid #8c8c8c;
  background-color: #1f497d;
  color: #fff;
  font-weight: bold;
}

tr .num {
  padding-right: 6px;
  border-right: 1px solid #000;
  border-bottom: 1px solid #dcdcdc;
  background-color: #f4f4f4;
  box-shadow: inset -2px 0 #d0d0d0;
  font-family: "Open Sans", sans-serif;
  font-size: 16px;
  font-weight: normal;
  text-align: right;
  color: #666;
}

.titles .num {
  border-bottom: 2px solid #8c8c8c;
}

.r2 td { height: 51px; }
.r3 td { height: 102px; }
.r4 td { height: 101px; }
.r5 td { height: 114px; }
.r6 td { height: 76px; }
.r8 td { height: 80px; padding-top: 2px; vertical-align: top; }

.vscroll {
  flex: none;
  display: flex;
  flex-direction: column;
  align-items: center;
  width: 15px;
  padding: 5px 0;
  background-color: #e6e6e6;
}

.vscroll .thumb {
  width: 9px;
  height: 56px;
  margin: 9px 0 auto;
  border-radius: 5px;
  background-color: #8a8a88;
}

.up, .down {
  border: 5px solid transparent;
  border-bottom: 8px solid #8a8a88;
  border-top: none;
}

.down {
  border-top: 8px solid #8a8a88;
  border-bottom: none;
}

.hscroll {
  flex: none;
  display: flex;
  align-items: center;
  height: 15px;
  padding: 0 20px 0 5px;
  background-color: #e6e6e6;
}

.hscroll .thumb {
  width: 430px;
  height: 9px;
  margin: 0 auto 0 70px;
  border-radius: 5px;
  background-color: #8a8a88;
}

.left, .right {
  border: 5px solid transparent;
  border-right: 8px solid #8a8a88;
  border-left: none;
}

.right {
  border-left: 8px solid #8a8a88;
  border-right: none;
}

.sheet-tabs {
  flex: none;
  display: flex;
  align-items: center;
  height: 41px;
  border-bottom: 1px solid #d8d8d8;
  color: #444;
}

.sheet-tabs a {
  padding: 0 14px;
  line-height: 40px;
}

.sheet-tabs .nav {
  width: 40px;
}

.sheet-tabs .hover {
  background-color: #e0dedd;
}

.sheet-tabs .current {
  font-weight: 600;
  padding: 0 11px;
}

.current span {
  display: block;
  line-height: 37px;
  border-bottom: 3px solid #1e8449;
}

.status {
  flex: none;
  display: flex;
  align-items: center;
  justify-content: space-between;
  height: 28px;
  padding: 1px 15px 0 25px;
  background-color: #fff;
  font-size: 14px;
  color: #555;
}

.status-tools {
  display: flex;
  align-items: center;
}

.status-tools button {
  width: 40px;
}

.status-tools .narrow {
  width: 28px;
}

.help span {
  width: 18px;
  height: 18px;
  border: 1px solid #444;
  border-radius: 50%;
  font-size: 12px;
  line-height: 16px;
}

.zoom {
  width: 72px;
  height: 23px;
  padding-left: 6px;
  border: 1px solid #c8c8c8;
  border-radius: 4px;
}

/* taskbar */
.taskbar {
  flex: none;
  position: relative;
  display: grid;
  grid-template-columns: 1fr auto 1fr;
  align-items: center;
  height: 60px;
  background: linear-gradient(to right, #2a2926 0, #1f2930 8%, #182a38 15%, #2a2926 24%, #2a2926 36%, #202a30 50%, #202a30 58%, #2a2926 65%, #2a2926 82%, #1d2934 88%, #292927 97%);
  color: #fff;
  font-size: 15px;
}

.taskbar p {
  margin: 0;
  line-height: 20px;
}

.taskbar p span {
  display: block;
}

.widget {
  position: relative;
  display: flex;
  align-items: center;
  gap: 4px;
  padding-left: 24px;
}

.widget p span {
  color: #f99ba2;
}

.badge {
  position: absolute;
  left: 39px;
  top: -2px;
  width: 20px;
  height: 20px;
  border-radius: 50%;
  background-color: #f9949c;
  color: #111;
  font-size: 14px;
  font-style: normal;
  line-height: 20px;
  text-align: center;
}

.tasks {
  display: flex;
  align-items: center;
  gap: 5px;
}

.tasks button {
  position: relative;
  width: 50px;
  height: 50px;
  border-radius: 5px;
}

.task-search {
  display: flex;
  align-items: center;
  gap: 13px;
  width: 275px;
  height: 40px;
  margin: 0 1px;
  padding: 0 11px 0 14px;
  border: 1px solid #5a5a5a;
  border-radius: 20px;
  background-color: #434444;
  font-size: 16px;
}

.task-search input {
  flex: 1;
  min-width: 0;
}

.task-search input::placeholder {
  color: #ddd;
  opacity: 1;
}

.tasks .focused {
  background-color: #35393b;
}

.focused::after, .running::after {
  content: "";
  position: absolute;
  bottom: 1px;
  left: 21px;
  width: 8px;
  height: 4px;
  border-radius: 2px;
  background-color: #a0a09e;
}

.focused::after {
  left: 15px;
  width: 20px;
  background-color: #2f9fe8;
}

.tasks .badge {
  left: 26px;
  top: 4px;
}

.tasks .red {
  background-color: #d9300f;
  color: #fff;
}

.tasks .blue {
  background-color: #1c9cf0;
}

.tasks .dot {
  width: 18px;
  height: 18px;
  border: 5px solid #f0605f;
  background-color: #fff;
}

.tray {
  display: flex;
  align-items: center;
  justify-content: flex-end;
  padding-right: 24px;
}

.tray button {
  width: 40px;
  height: 50px;
}

.tray .mic {
  border: 1px solid #4a4c4d;
  border-radius: 5px;
  background-color: #35393b;
}

.lang {
  margin: 0 21px 0 14px;
}

.system {
  display: flex;
  align-items: center;
  gap: 9px;
  margin-right: 19px;
}

.clock {
  text-align: right;
}

.watermark {
  position: absolute;
  left: 834px;
  bottom: 10px;
  color: rgba(160, 155, 155, 0.5);
  font-family: "DejaVu Sans", sans-serif;
  font-size: 65px;
  font-weight: bold;
  line-height: 60px;
  pointer-events: none;
}
```
